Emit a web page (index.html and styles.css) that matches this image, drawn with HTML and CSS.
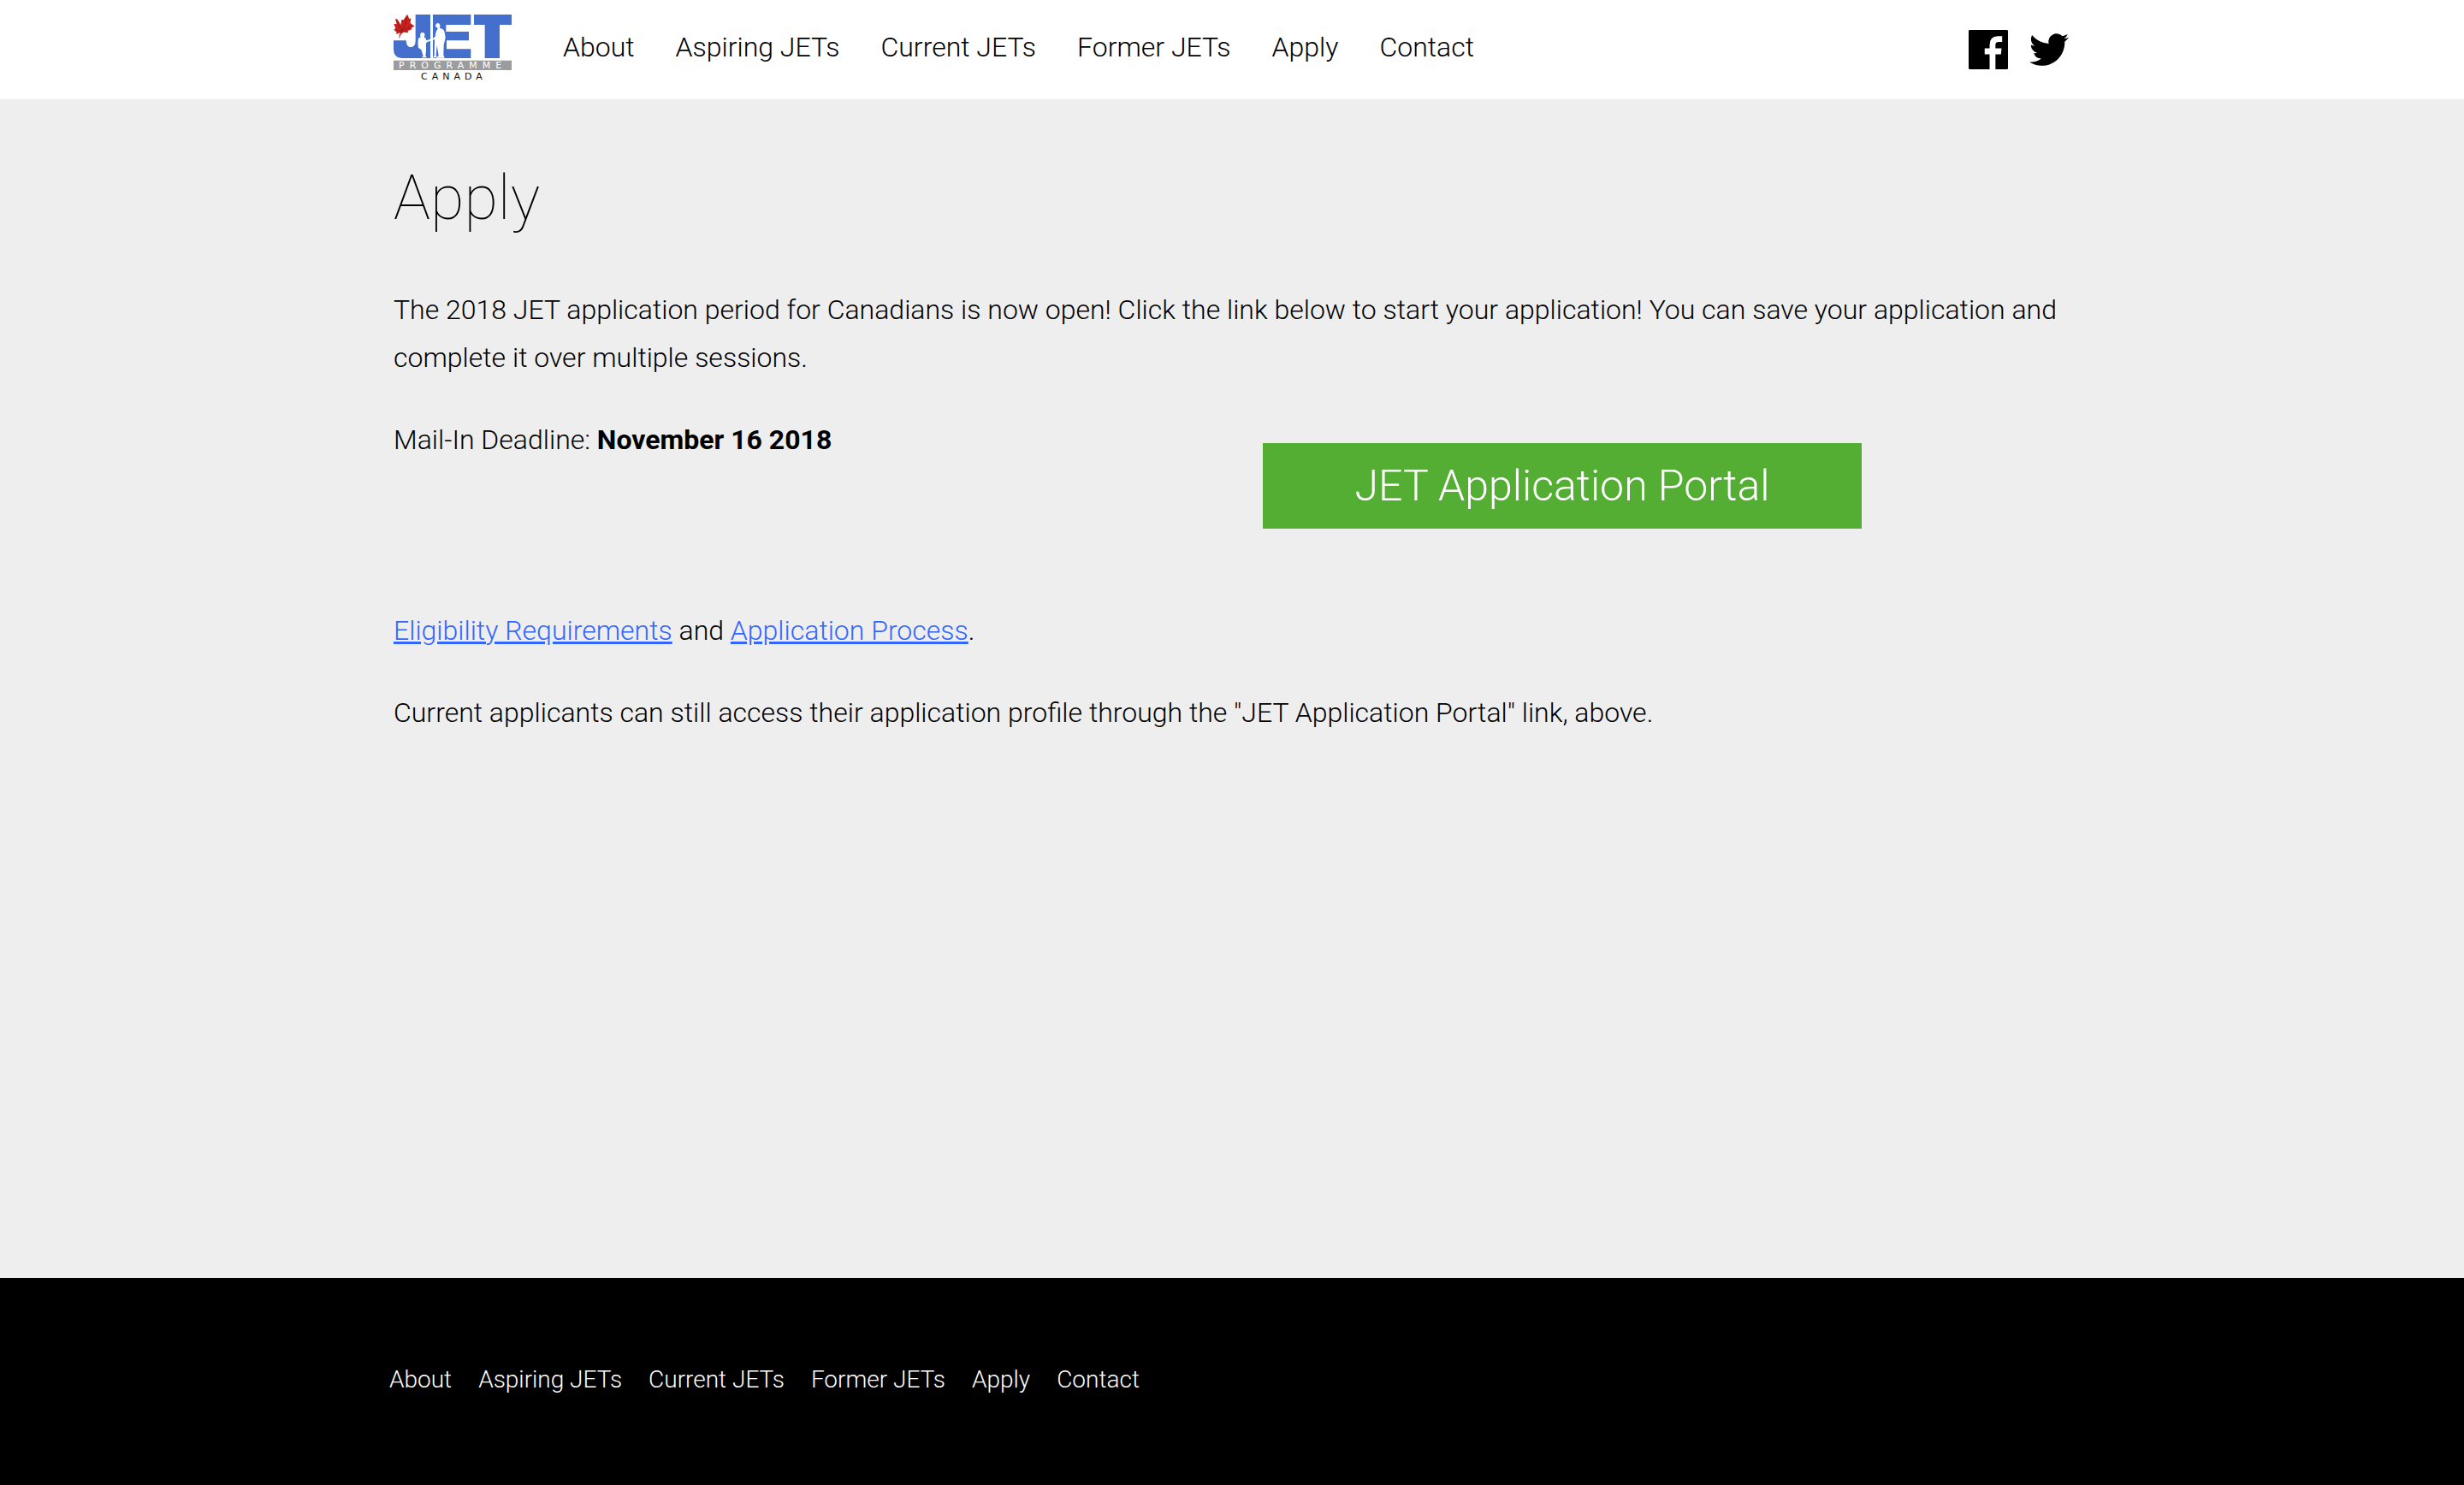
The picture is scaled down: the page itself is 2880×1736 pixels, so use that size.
FILE: index.html
```html
<!DOCTYPE html>
<html lang="en">
<head>
<meta charset="utf-8">
<meta name="viewport" content="width=device-width, initial-scale=1">
<title>Apply | JET Programme Canada</title>
<link rel="stylesheet" href="styles.css">
</head>
<body>
<header class="site-header">
  <div class="container header-row">
    <a class="logo" href="#" aria-label="JET Programme Canada">
      <svg class="logo-art" viewBox="0 0 138 78" aria-hidden="true">
        <g transform="translate(-10 -17) scale(.33333)">
          <g fill="#446fcc">
            <path d="M107 51H159V204H58Q30 202 30 172V142H74Q75 166 91 166Q107 165 107 142Z"/>
            <path d="M168 51H301V87H214V111H294V142H216V172H301V204H168Z"/>
            <path d="M312 51H444V87H402V204H350V87H312Z"/>
          </g>
          <g fill="#fff">
            <path d="M124 124Q122 114 131 114Q141 114 139 124L138 131Q145 133 145 142L168 135L176 128Q178 107 185 102L183 97L177 93Q177 82 185 81Q194 82 193 93L192 99Q207 101 209 113L212 132Q209 145 206 157L205 193L209 203H179L188 195L182 158L179 194L182 200L168 203L173 195L174 138L147 148L144 152L144 180L142 196L147 202H127L134 197L127 174L117 168Q114 148 117 136Q120 131 126 130L123 127Z"/>
          </g>
          <path fill="#c8201c" d="M78 50L85 66L91 64L89 81L104 92L93 97L94 103L80 108L82 115L65 113Q53 119 51 134L49 133Q49 122 54 115L39 120L41 113L31 104L37 100L31 83L41 85L36 65L44 68L55 87L58 69L65 70Z"/>
          <path fill="none" stroke="#7e1512" stroke-width="2" d="M78 58L70 90L56 112M41 73L59 108M96 91L58 110M36 103L57 112"/>
          <path fill="#9a9c9e" d="M30 212H444V246H30Z"/>
        </g>
        <text class="logo-programme" x="6" y="63">PROGRAMME</text>
        <text class="logo-canada" x="32" y="76">CANADA</text>
      </svg>
    </a>
    <nav class="main-nav" aria-label="Main">
      <a href="#">About</a>
      <a href="#">Aspiring JETs</a>
      <a href="#">Current JETs</a>
      <a href="#">Former JETs</a>
      <a href="#">Apply</a>
      <a href="#">Contact</a>
    </nav>
    <div class="social">
      <a href="#" aria-label="Facebook">
        <svg class="social-icon" viewBox="0 0 135 135" aria-hidden="true">
          <path d="M4 0H131Q135 0 135 4V131Q135 135 131 135H92V84H111L113 63H92V51Q92 41 103 41H115V21H100Q72 21 72 52V63H55V84H72V135H4Q0 135 0 131V4Q0 0 4 0Z"/>
        </svg>
      </a>
      <a href="#" aria-label="Twitter">
        <svg class="social-icon" viewBox="0 0 24 24" aria-hidden="true">
          <path d="M23.953 4.57a10 10 0 01-2.825.775 4.958 4.958 0 002.163-2.723c-.951.555-2.005.959-3.127 1.184a4.92 4.92 0 00-8.384 4.482C7.69 8.095 4.067 6.13 1.64 3.162a4.822 4.822 0 00-.666 2.475c0 1.71.87 3.213 2.188 4.096a4.904 4.904 0 01-2.228-.616v.06a4.923 4.923 0 003.946 4.827 4.996 4.996 0 01-2.212.085 4.936 4.936 0 004.604 3.417 9.867 9.867 0 01-6.102 2.105c-.39 0-.779-.023-1.17-.067a13.995 13.995 0 007.557 2.209c9.053 0 13.998-7.496 13.998-13.985 0-.21 0-.42-.015-.63A9.935 9.935 0 0024 4.59z"/>
        </svg>
      </a>
    </div>
  </div>
</header>

<main class="site-main">
  <div class="container content">
    <h1>Apply</h1>
    <p>The 2018 JET application period for Canadians is now open! Click the link below to start your application! You can save your application and complete it over multiple sessions.</p>
    <div class="deadline-row">
      <p>Mail-In Deadline: <strong>November 16 2018</strong></p>
      <div class="portal">
        <a class="portal-link" href="#">JET Application Portal</a>
      </div>
    </div>
    <p><a href="#">Eligibility Requirements</a> and <a href="#">Application Process</a>.</p>
    <p>Current applicants can still access their application profile through the "JET Application Portal" link, above.</p>
  </div>
</main>

<footer class="site-footer">
  <nav class="footer-nav" aria-label="Footer">
    <a href="#">About</a>
    <a href="#">Aspiring JETs</a>
    <a href="#">Current JETs</a>
    <a href="#">Former JETs</a>
    <a href="#">Apply</a>
    <a href="#">Contact</a>
  </nav>
</footer>
</body>
</html>
```
FILE: styles.css
```css
* {
  box-sizing: border-box;
}

body {
  margin: 0;
  min-height: 100vh;
  display: flex;
  flex-direction: column;
  background: #eee;
  color: #000;
  font-family: Roboto, "Liberation Sans", sans-serif;
  font-size: 32px;
  font-weight: 300;
  line-height: 56px;
}

.container {
  width: 100%;
  max-width: 1960px;
  margin: 0 auto;
}

.site-header {
  background: #fff;
}

.header-row {
  display: flex;
  align-items: flex-start;
  padding: 17px 0 21px;
}

.logo,
.social a {
  display: block;
}

.logo-art {
  display: block;
  width: 138px;
  height: 78px;
}

.logo-programme,
.logo-canada {
  font-family: "DejaVu Sans", sans-serif;
  font-size: 11px;
  font-weight: 400;
}

.logo-programme {
  fill: #fff;
  letter-spacing: 6px;
}

.logo-canada {
  fill: #111;
  letter-spacing: 5px;
}

.main-nav {
  display: flex;
  flex-wrap: wrap;
  gap: 0 48px;
  margin-left: 60px;
  padding-top: 10px;
}

.main-nav a {
  color: #000;
  text-decoration: none;
}

.social {
  display: flex;
  gap: 25px;
  margin-left: auto;
  padding: 18px 2px 0 0;
}

.social-icon {
  display: block;
  width: 46px;
  height: 46px;
}

.site-main {
  flex: 1;
}

.content {
  display: flex;
  flex-direction: column;
  gap: 40px;
  padding: 74px 0;
}

h1 {
  margin: 0 0 20px;
  font-size: 72px;
  font-weight: 100;
  line-height: 84px;
}

p {
  margin: 0;
}

p a {
  color: #36f;
}

strong {
  font-weight: 700;
}

.deadline-row {
  display: grid;
  grid-template-columns: 1fr 1fr;
}

.portal {
  padding: 32px 0 51px 36px;
}

.portal-link {
  display: block;
  max-width: 700px;
  background: #53ae33;
  color: #fff;
  font-size: 50px;
  line-height: 100px;
  text-align: center;
  text-decoration: none;
}

.site-footer {
  padding: 91px 0 95px;
  background: #000;
}

.footer-nav {
  display: flex;
  flex-wrap: wrap;
  gap: 0 31px;
  max-width: 1970px;
  margin: 0 auto;
  font-size: 28px;
}

.footer-nav a {
  color: #fff;
  text-decoration: none;
}
```
